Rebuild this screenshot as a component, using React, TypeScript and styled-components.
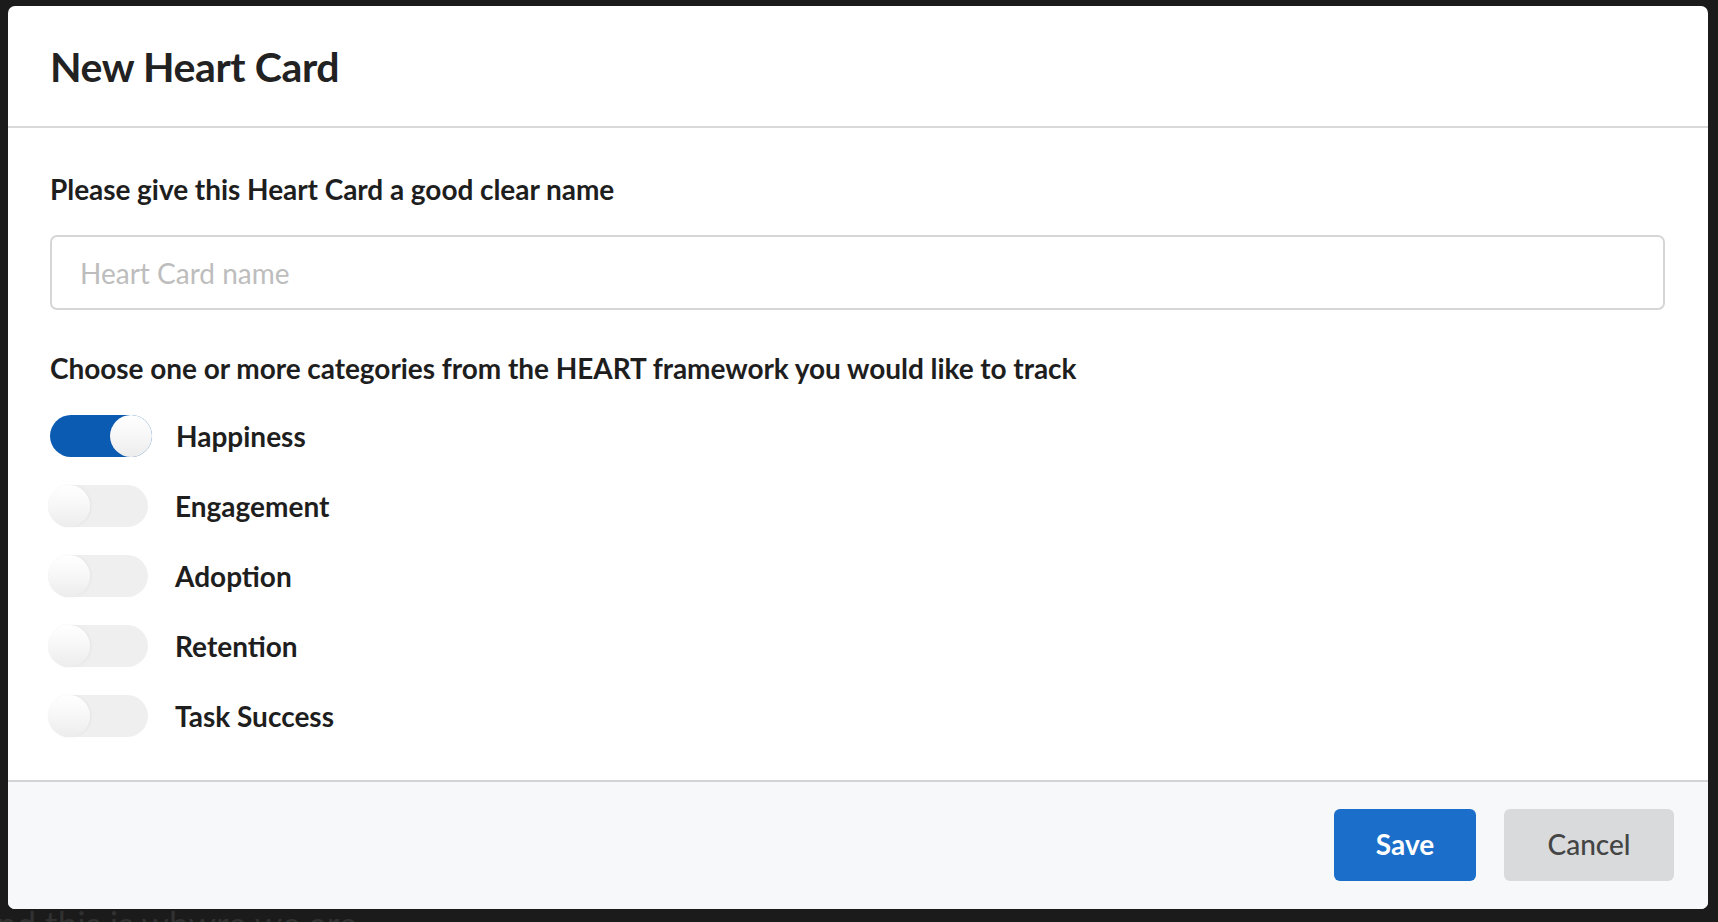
import React, { useState } from "react";
import styled, { createGlobalStyle } from "styled-components";

const GlobalStyle = createGlobalStyle`
  html, body {
    margin: 0;
    padding: 0;
    background: #1b1b1b;
  }
  * { box-sizing: border-box; }
`;

const Page = styled.div`
  width: 1718px;
  height: 922px;
  overflow: hidden;
  background: #1b1b1b;
  padding: 6px 10px 0 8px;
  display: flex;
  flex-direction: column;
  font-family: Lato, "Open Sans", sans-serif;
`;

const Modal = styled.div`
  width: 1700px;
  height: 903px;
  flex: none;
  background: #ffffff;
  border-radius: 7px;
  overflow: hidden;
  display: flex;
  flex-direction: column;
`;

const Header = styled.div`
  height: 122px;
  flex: none;
  display: flex;
  align-items: center;
  padding: 1px 42px 0;
  border-bottom: 2px solid #d9d9d9;
`;

const Title = styled.h1`
  margin: 0;
  font-size: 41px;
  font-weight: 700;
  color: #222;
  letter-spacing: -0.4px;
`;

const Body = styled.div`
  flex: 1;
  padding: 45px 43px 0 42px;
  display: flex;
  flex-direction: column;
`;

const Label = styled.div<{ $gap: number }>`
  font-size: 28px;
  line-height: 32px;
  font-weight: 700;
  color: #1e1e1e;
  letter-spacing: -0.05px;
  margin-bottom: ${(p) => p.$gap}px;
`;

const NameInput = styled.input`
  height: 75px;
  width: 100%;
  border: 2px solid #d6d6d6;
  border-radius: 7px;
  padding: 0 28px;
  font-family: Lato, "Open Sans", sans-serif;
  font-size: 28px;
  color: #222;
  outline: none;
  margin-bottom: 42px;
  &::placeholder {
    color: #bdbdbd;
  }
`;

const ToggleList = styled.div`
  display: flex;
  flex-direction: column;
  gap: 28px;
`;

const Row = styled.label`
  display: flex;
  align-items: center;
  height: 42px;
  cursor: pointer;
`;

const Track = styled.span<{ $on: boolean }>`
  position: relative;
  flex: none;
  width: ${(p) => (p.$on ? 102 : 100)}px;
  height: 42px;
  border-radius: 21px;
  margin-left: ${(p) => (p.$on ? 0 : -2)}px;
  margin-right: ${(p) => (p.$on ? 24 : 27)}px;
  background: ${(p) => (p.$on ? "#0b5bb2" : "#efefef")};
`;

const Knob = styled.span<{ $on: boolean }>`
  position: absolute;
  top: 0;
  left: ${(p) => (p.$on ? "60px" : "0")};
  width: 42px;
  height: 42px;
  border-radius: 50%;
  background: linear-gradient(180deg, #ffffff 0%, #f6f6f6 55%, #ececec 100%);
  box-shadow: ${(p) =>
    p.$on ? "0 0 0 0.5px rgba(0,0,0,0.04)" : "1px 0 3px rgba(0,0,0,0.05)"};
`;

const RowText = styled.span`
  font-size: 28px;
  font-weight: 700;
  color: #1e1e1e;
`;

const Footer = styled.div`
  height: 129px;
  flex: none;
  background: #f7f8fa;
  border-top: 2px solid #d3d4d8;
  display: flex;
  align-items: center;
  justify-content: flex-end;
  gap: 28px;
  padding: 0 34px 2px 0;
`;

const Button = styled.button<{ $primary?: boolean }>`
  height: 72px;
  width: ${(p) => (p.$primary ? 142 : 170)}px;
  border: none;
  border-radius: 6px;
  padding: 0 0 2px;
  font-family: Lato, "Open Sans", sans-serif;
  font-size: 28px;
  font-weight: ${(p) => (p.$primary ? 700 : 500)};
  color: ${(p) => (p.$primary ? "#ffffff" : "#444444")};
  background: ${(p) => (p.$primary ? "#1b6ec9" : "#d9dadc")};
  cursor: pointer;
`;

const BehindText = styled.div`
  margin-left: -11px;
  margin-top: -6px;
  font-size: 35px;
  line-height: 40px;
  font-weight: 400;
  color: #313131;
  white-space: nowrap;
`;

const categories = ["Happiness", "Engagement", "Adoption", "Retention", "Task Success"];

export default function App() {
  const [on, setOn] = useState<Record<string, boolean>>({ Happiness: true });
  return (
    <>
      <GlobalStyle />
      <Page>
        <Modal>
          <Header>
            <Title>New Heart Card</Title>
          </Header>
          <Body>
            <Label $gap={30}>Please give this Heart Card a good clear name</Label>
            <NameInput placeholder="Heart Card name" />
            <Label $gap={31}>
              Choose one or more categories from the HEART framework you would like to track
            </Label>
            <ToggleList>
              {categories.map((c) => (
                <Row key={c} onClick={() => setOn({ ...on, [c]: !on[c] })}>
                  <Track $on={!!on[c]}>
                    <Knob $on={!!on[c]} />
                  </Track>
                  <RowText>{c}</RowText>
                </Row>
              ))}
            </ToggleList>
          </Body>
          <Footer>
            <Button $primary>Save</Button>
            <Button>Cancel</Button>
          </Footer>
        </Modal>
        <BehindText>nd this is whwre we are</BehindText>
      </Page>
    </>
  );
}
